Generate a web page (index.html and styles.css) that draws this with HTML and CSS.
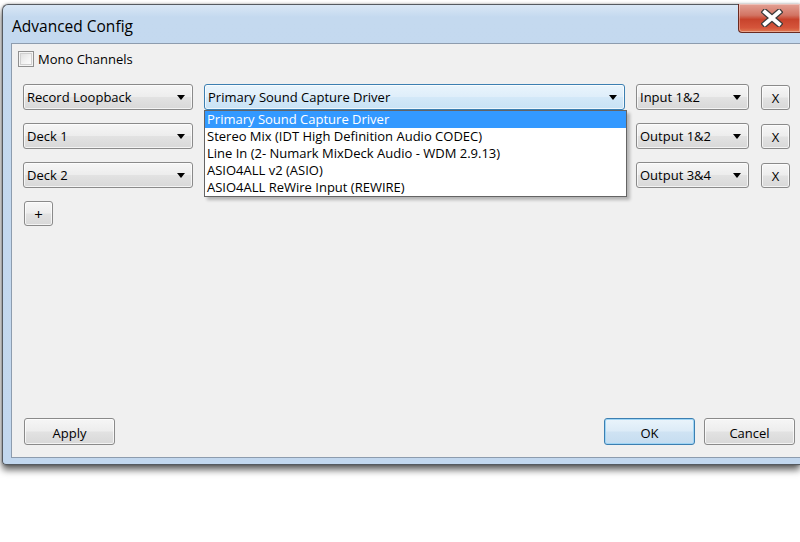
FILE: index.html
```html
<!DOCTYPE html>
<html>
<head>
<meta charset="utf-8">
<link rel="stylesheet" href="styles.css">
</head>
<body>
<div class="window">
  <div class="titlebar">
    <span class="title">Advanced Config</span>
    <div class="close">
      <svg width="22" height="18" viewBox="0 0 22 18">
        <path d="M4 3 L18 15 M18 3 L4 15" stroke="#3a3a3a" stroke-width="6.4" stroke-linecap="square" fill="none"/>
        <path d="M4 3 L18 15 M18 3 L4 15" stroke="#ffffff" stroke-width="4" stroke-linecap="square" fill="none"/>
      </svg>
    </div>
  </div>
  <div class="client">
    <div class="check"><span class="box"></span><span>Mono Channels</span></div>
    <div class="rows">
      <div class="row">
        <div class="combo c1"><span>Record Loopback</span><i class="arrow"></i></div>
        <div class="combo c2 focus"><span>Primary Sound Capture Driver</span><i class="arrow"></i>
          <ul class="dropdown">
            <li class="sel">Primary Sound Capture Driver</li>
            <li>Stereo Mix (IDT High Definition Audio CODEC)</li>
            <li>Line In (2- Numark MixDeck Audio - WDM 2.9.13)</li>
            <li>ASIO4ALL v2 (ASIO)</li>
            <li>ASIO4ALL ReWire Input (REWIRE)</li>
          </ul>
        </div>
        <div class="combo c3"><span>Input 1&amp;2</span><i class="arrow"></i></div>
        <div class="btn xbtn">X</div>
      </div>
      <div class="row">
        <div class="combo c1"><span>Deck 1</span><i class="arrow"></i></div>
        <div class="combo c2"><span></span><i class="arrow"></i></div>
        <div class="combo c3"><span>Output 1&amp;2</span><i class="arrow"></i></div>
        <div class="btn xbtn">X</div>
      </div>
      <div class="row">
        <div class="combo c1"><span>Deck 2</span><i class="arrow"></i></div>
        <div class="combo c2"><span></span><i class="arrow"></i></div>
        <div class="combo c3"><span>Output 3&amp;4</span><i class="arrow"></i></div>
        <div class="btn xbtn">X</div>
      </div>
    </div>
    <div class="btn plus">+</div>
    <div class="spacer"></div>
    <div class="bottom">
      <div class="btn wide">Apply</div>
      <div class="grow"></div>
      <div class="btn wide default">OK</div>
      <div class="btn wide">Cancel</div>
    </div>
  </div>
</div>
</body>
</html>
```
FILE: styles.css
```css
html, body {
  margin: 0;
  padding: 0;
}
body {
  width: 800px;
  height: 542px;
  overflow: hidden;
  background: #ffffff;
  font-family: "Open Sans", "Noto Sans", sans-serif;
  font-size: 13px;
  color: #000;
}
.window {
  margin: 4px 0 0 2px;
  width: 798px;
  height: 461px;
  border: 1px solid #555a60;
  border-right: none;
  border-radius: 6px 0 0 4px;
  background: linear-gradient(to bottom, #d9e7f5 0px, #c4d9ef 12px, #c2d7ee 100%);
  box-shadow: 0 5px 7px rgba(0,0,0,0.6), 0 0 3px rgba(0,0,0,0.35);
  padding: 0 0 6px 8px;
  box-sizing: border-box;
  display: flex;
  flex-direction: column;
  position: relative;
}
.titlebar {
  height: 38px;
  display: flex;
  align-items: center;
  position: relative;
}
.title {
  font-size: 15.5px;
  margin-left: 1px;
  margin-top: 3px;
  color: #000;
}
.close {
  position: absolute;
  left: 727px;
  right: 0;
  top: -1px;
  height: 29px;
  box-sizing: border-box;
  border: 1px solid #6b2a20;
  border-top: none;
  border-right: none;
  border-radius: 0 0 0 4px;
  background: linear-gradient(to bottom, #e3a195 0%, #d27463 40%, #c8432c 55%, #d5553b 85%, #e07a52 100%);
  box-shadow: inset 0 0 0 1px rgba(255,255,255,0.35);
  display: flex;
  justify-content: flex-start;
  padding-left: 22px;
  align-items: center;
}
.client {
  flex: 1;
  background: #f0f0f0;
  border: 1px solid #8d9cae;
  border-right: none;
  padding: 6px 0 12px 11px;
  display: flex;
  flex-direction: column;
}
.check {
  display: flex;
  align-items: center;
  margin-left: -5px;
  height: 17px;
  gap: 4px;
}
.box {
  width: 14px;
  height: 14px;
  border: 1px solid #8f8f8f;
  background: linear-gradient(135deg, #dcdcdc 0%, #f4f4f4 60%, #ffffff 100%);
  box-shadow: inset 0 0 0 1px #f4f4f4, inset 0 0 0 2px #d0d0d0;
}
.rows {
  margin-top: 17px;
  display: flex;
  flex-direction: column;
  gap: 13px;
}
.row {
  display: flex;
  align-items: flex-start;
  height: 26px;
}
.combo {
  height: 26px;
  box-sizing: border-box;
  border: 1px solid #8a8a8a;
  border-radius: 3px;
  background: linear-gradient(to bottom, #f6f6f6 0%, #ededed 48%, #e2e2e2 52%, #d8d8d8 100%);
  box-shadow: inset 0 0 0 1px rgba(255,255,255,0.7);
  display: flex;
  align-items: center;
  padding-left: 3px;
  position: relative;
}
.combo span {
  flex: 1;
  white-space: nowrap;
}
.c1 { width: 170px; }
.c2 { width: 421px; margin-left: 11px; }
.c3 { width: 113px; margin-left: 11px; }
.focus {
  border-color: #3c7fb1;
  background: linear-gradient(to bottom, #e9f4fc 0%, #dfeefa 48%, #d3e8f8 52%, #c8e2f5 100%);
}
.arrow {
  width: 0;
  height: 0;
  border-left: 4.5px solid transparent;
  border-right: 4.5px solid transparent;
  border-top: 5px solid #000;
  margin-right: 7px;
  margin-top: 1px;
}
.dropdown {
  position: absolute;
  left: -1px;
  top: 25px;
  width: 423px;
  margin: 0;
  padding: 0;
  list-style: none;
  background: #fff;
  border: 1px solid #646464;
  box-sizing: border-box;
  box-shadow: 3px 3px 3px rgba(0,0,0,0.25);
  z-index: 5;
}
.dropdown li {
  height: 17px;
  line-height: 17px;
  padding-left: 2px;
  white-space: nowrap;
}
.dropdown li.sel {
  background: #3399ff;
  color: #fff;
}
.btn {
  box-sizing: border-box;
  border: 1px solid #8a8a8a;
  border-radius: 3px;
  background: linear-gradient(to bottom, #f6f6f6 0%, #ededed 48%, #e2e2e2 52%, #d8d8d8 100%);
  box-shadow: inset 0 0 0 1px rgba(255,255,255,0.7);
  display: flex;
  align-items: center;
  justify-content: center;
}
.xbtn {
  width: 29px;
  height: 25px;
  margin-left: 12px;
  margin-top: 1px;
  font-size: 13px;
}
.plus {
  width: 29px;
  height: 25px;
  margin-top: 13px;
  margin-left: 1px;
  font-size: 15px;
}
.spacer { flex: 1; }
.bottom {
  display: flex;
  width: 772px;
  padding-left: 1px;
  box-sizing: border-box;
}
.grow { flex: 1; }
.wide {
  width: 91px;
  height: 27px;
  font-size: 13px;
  padding-top: 2px;
}
.wide + .wide { margin-left: 9px; }
.default {
  border-color: #3c7fb1;
  background: linear-gradient(to bottom, #eaf4fb 0%, #dcebf7 48%, #cfe3f3 52%, #c5ddf0 100%);
  box-shadow: inset 0 0 0 1px #9fd5f5;
}
```
